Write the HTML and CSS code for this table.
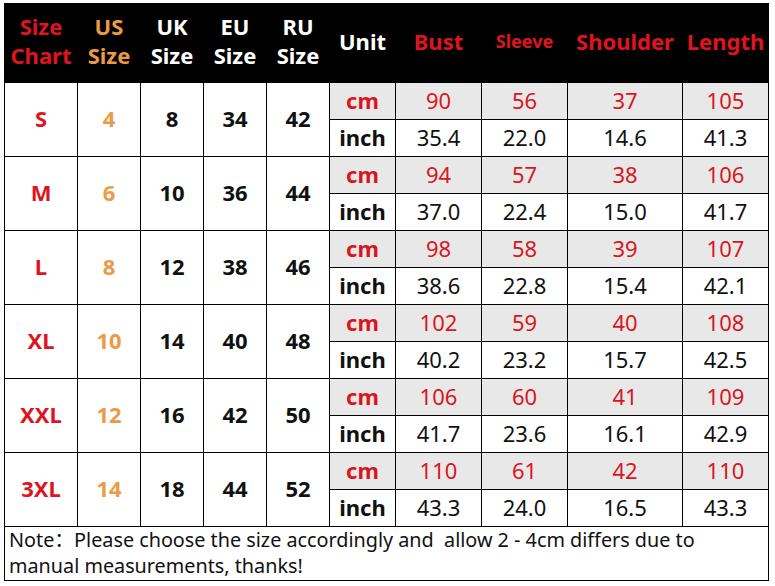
FILE: index.html
```html
<!DOCTYPE html>
<html>
<head>
<meta charset="utf-8">
<link rel="stylesheet" href="styles.css">
</head>
<body>
<div class="chart">
  <div class="h red">Size<br>Chart</div>
  <div class="h orange">US<br>Size</div>
  <div class="h white">UK<br>Size</div>
  <div class="h white">EU<br>Size</div>
  <div class="h white">RU<br>Size</div>
  <div class="h white">Unit</div>
  <div class="h red">Bust</div>
  <div class="h red small">Sleeve</div>
  <div class="h red">Shoulder</div>
  <div class="h red">Length</div>

  <div class="g red">S</div><div class="g orange">4</div><div class="g">8</div><div class="g">34</div><div class="g">42</div>
  <div class="u cm">cm</div><div class="v cm">90</div><div class="v cm">56</div><div class="v cm">37</div><div class="v cm">105</div>
  <div class="u">inch</div><div class="v">35.4</div><div class="v">22.0</div><div class="v">14.6</div><div class="v">41.3</div>

  <div class="g red">M</div><div class="g orange">6</div><div class="g">10</div><div class="g">36</div><div class="g">44</div>
  <div class="u cm">cm</div><div class="v cm">94</div><div class="v cm">57</div><div class="v cm">38</div><div class="v cm">106</div>
  <div class="u">inch</div><div class="v">37.0</div><div class="v">22.4</div><div class="v">15.0</div><div class="v">41.7</div>

  <div class="g red">L</div><div class="g orange">8</div><div class="g">12</div><div class="g">38</div><div class="g">46</div>
  <div class="u cm">cm</div><div class="v cm">98</div><div class="v cm">58</div><div class="v cm">39</div><div class="v cm">107</div>
  <div class="u">inch</div><div class="v">38.6</div><div class="v">22.8</div><div class="v">15.4</div><div class="v">42.1</div>

  <div class="g red">XL</div><div class="g orange">10</div><div class="g">14</div><div class="g">40</div><div class="g">48</div>
  <div class="u cm">cm</div><div class="v cm">102</div><div class="v cm">59</div><div class="v cm">40</div><div class="v cm">108</div>
  <div class="u">inch</div><div class="v">40.2</div><div class="v">23.2</div><div class="v">15.7</div><div class="v">42.5</div>

  <div class="g red">XXL</div><div class="g orange">12</div><div class="g">16</div><div class="g">42</div><div class="g">50</div>
  <div class="u cm">cm</div><div class="v cm">106</div><div class="v cm">60</div><div class="v cm">41</div><div class="v cm">109</div>
  <div class="u">inch</div><div class="v">41.7</div><div class="v">23.6</div><div class="v">16.1</div><div class="v">42.9</div>

  <div class="g red">3XL</div><div class="g orange">14</div><div class="g">18</div><div class="g">44</div><div class="g">52</div>
  <div class="u cm">cm</div><div class="v cm">110</div><div class="v cm">61</div><div class="v cm">42</div><div class="v cm">110</div>
  <div class="u">inch</div><div class="v">43.3</div><div class="v">24.0</div><div class="v">16.5</div><div class="v">43.3</div>

  <div class="note">Note：Please choose the size accordingly and &nbsp;allow 2 - 4cm differs due to manual measurements, thanks!</div>
</div>
</body>
</html>
```

FILE: styles.css
```css
html, body {
  margin: 0;
  padding: 0;
  background: #ffffff;
}
body {
  padding: 3px 0 0 4px;
  font-family: "Noto Sans", "Noto Sans CJK SC", sans-serif;
}
.chart {
  display: grid;
  grid-template-columns: 72px 62px 62px 62px 62px 65px 85px 85px 114px 85px;
  grid-template-rows: 78px repeat(12, 36px) 53px;
  gap: 1px;
  background: #000;
  border: 1px solid #000;
  width: 763px;
}
.chart > div {
  display: flex;
  align-items: center;
  justify-content: center;
  text-align: center;
  background: #fff;
  color: #111;
  font-size: 22px;
  padding-bottom: 3px;
}
.chart > .h {
  background: #000;
  font-weight: 700;
  line-height: 29px;
  padding-bottom: 4px;
}
.chart > .h.small { font-size: 18px; }
.chart > .g {
  grid-row: span 2;
  font-weight: 700;
}
.chart > .u { font-weight: 700; }
.chart > .cm { background: #e8e8e8; color: #d9161e; }
.chart > .red { color: #e0141f; }
.chart > .orange { color: #eb9a45; }
.chart > .white { color: #fff; }
.chart > .note {
  grid-column: 1 / -1;
  justify-content: flex-start;
  text-align: left;
  font-size: 19.8px;
  line-height: 26px;
  padding: 0 4px 1px;
  color: #111;
}
```
